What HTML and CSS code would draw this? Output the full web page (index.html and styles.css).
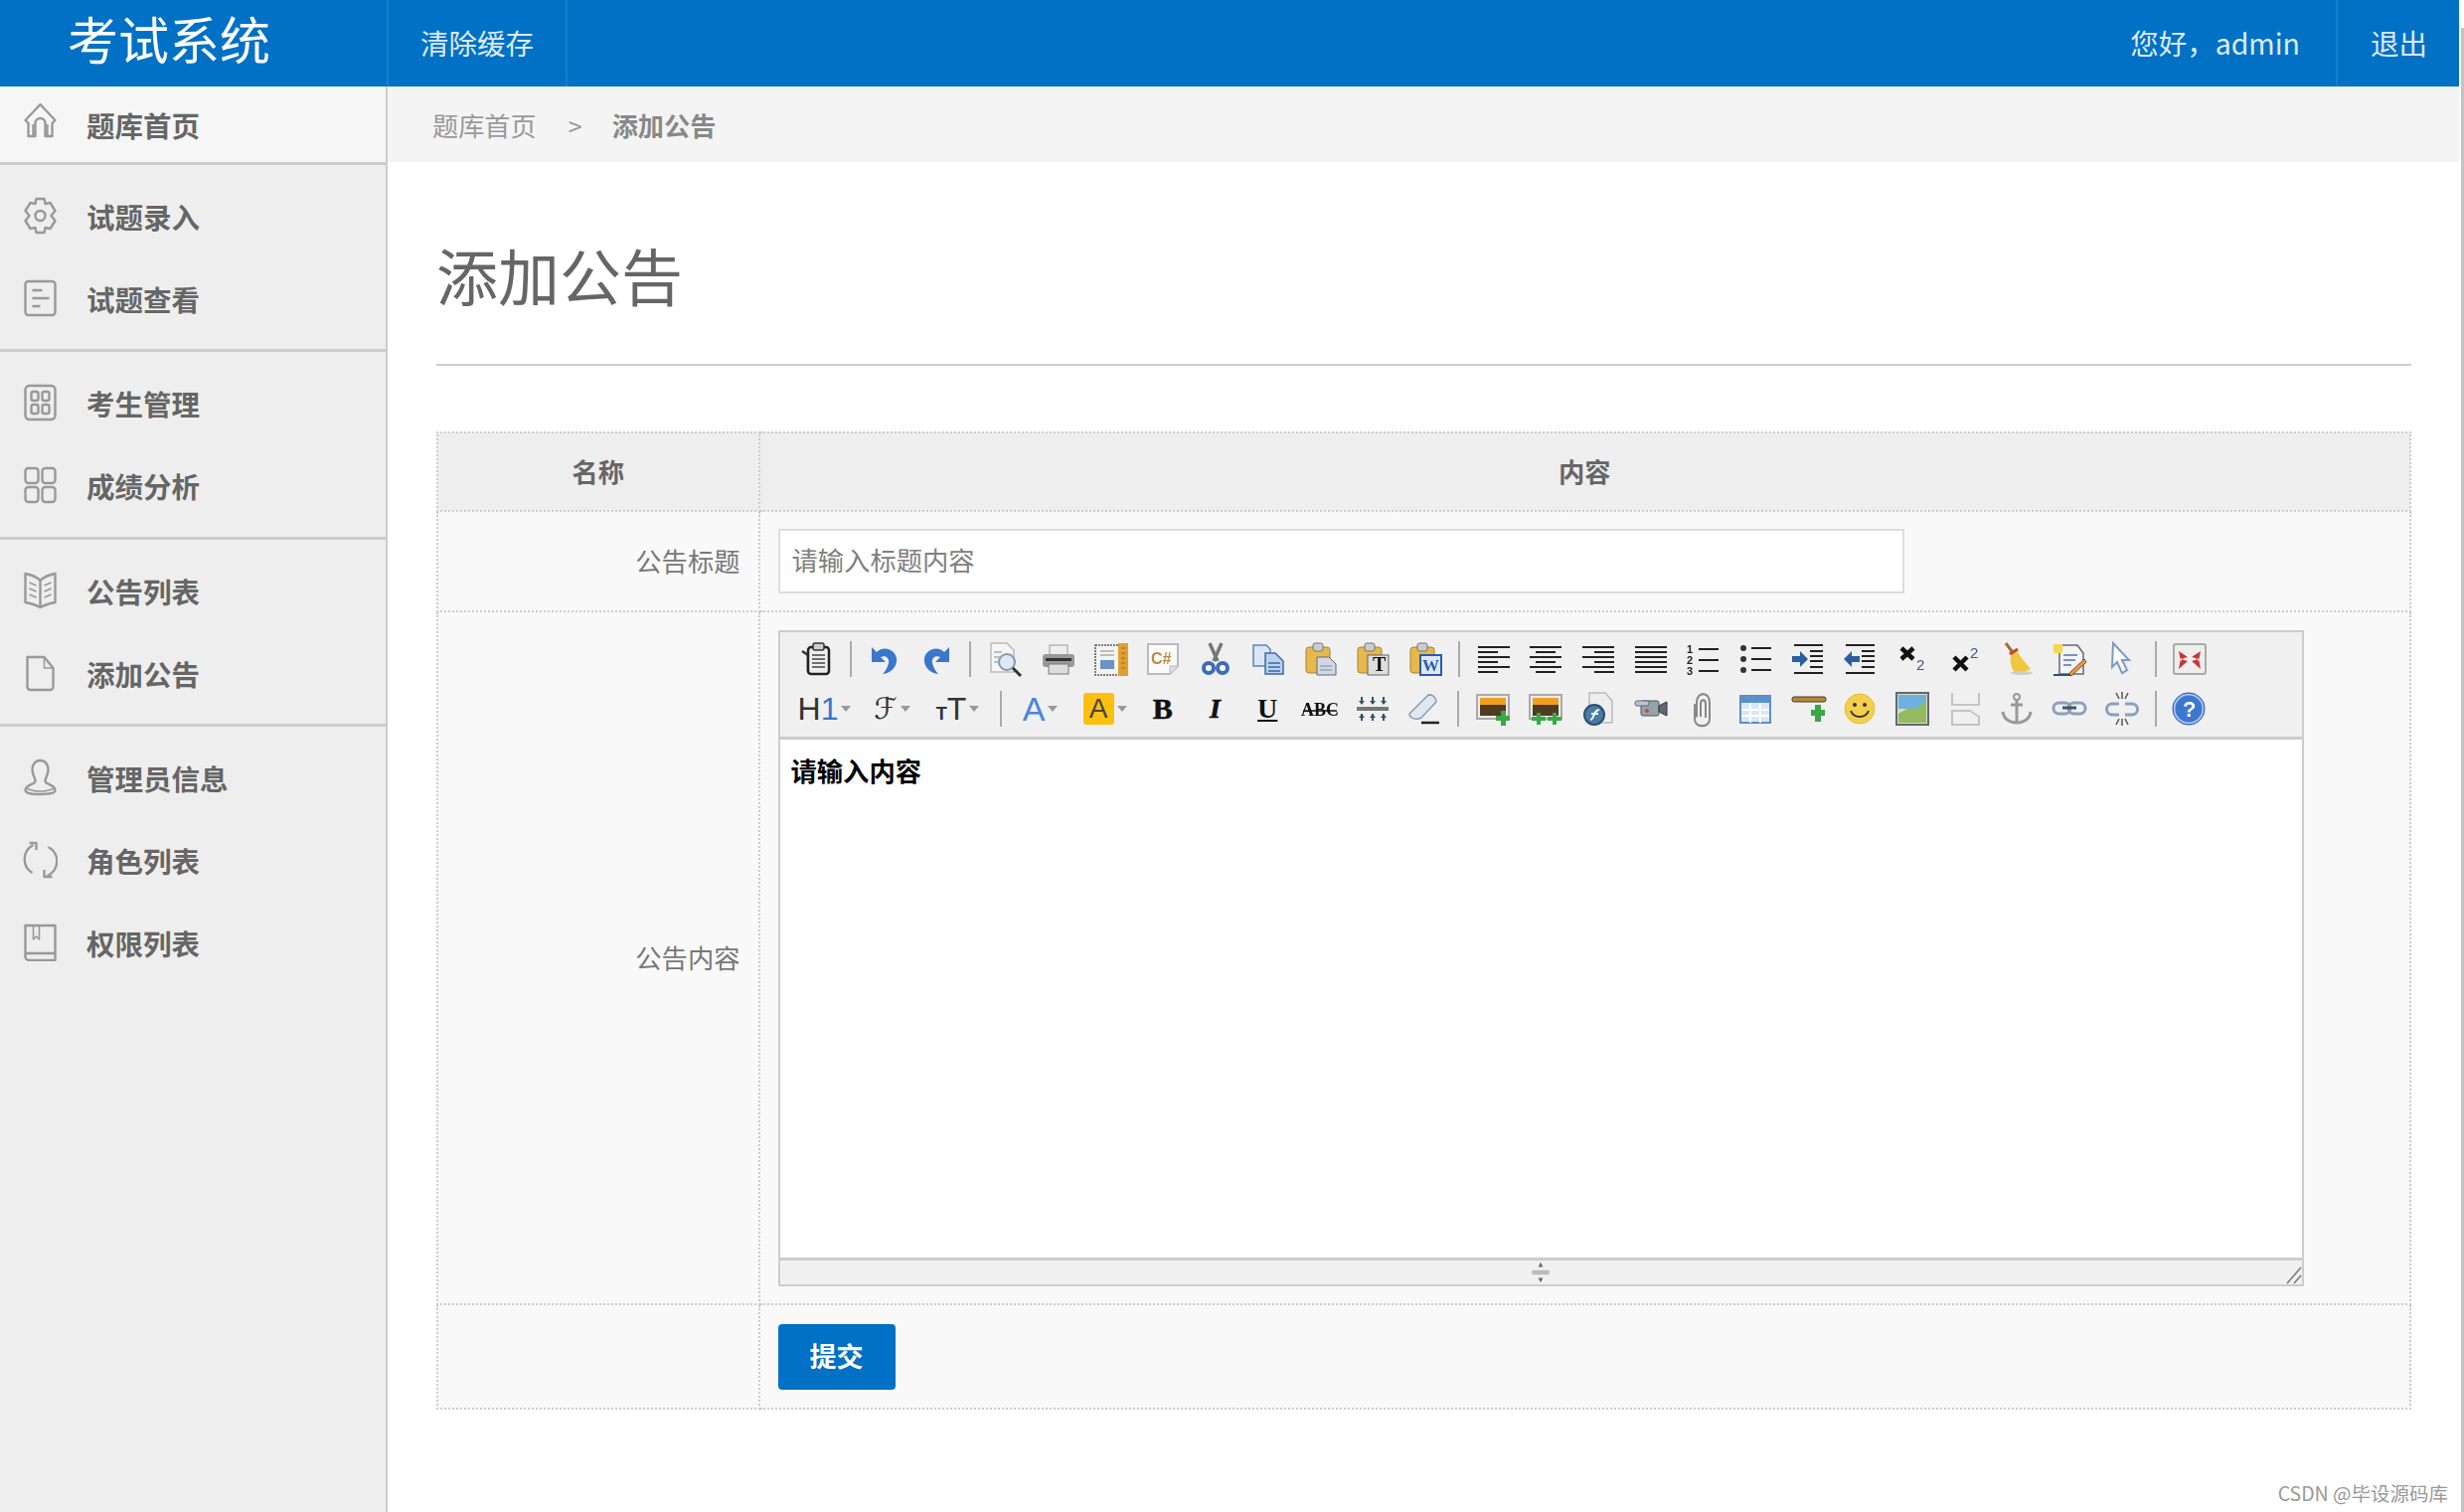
FILE: index.html
```html
<!DOCTYPE html>
<html lang="zh-CN">
<head>
<meta charset="utf-8">
<title>考试系统</title>
<link rel="stylesheet" href="styles.css">
</head>
<body>
<div class="page">
  <header class="topbar">
    <div class="logo">考试系统</div>
    <a class="nav-item nav-clear">清除缓存</a>
    <div class="spacer"></div>
    <span class="hello">您好，admin</span>
    <a class="nav-item nav-exit">退出</a>
  </header>
  <div class="body-row">
    <aside class="sidebar">
      <div class="home-row side-item">
        <svg class="side-icon home-icon" viewBox="0 0 34 38"><path d="M2 19 17 3l15 16-3 3v13h-7V22a5 5 0 0 0-10 0v13H5V22z"/><path d="M10 36V23M24 36V23"/></svg>
        <span>题库首页</span>
      </div>
      <div class="side-group g1">
        <div class="side-item">
          <svg class="side-icon" viewBox="0 0 34 38"><path d="M13 2h8l1 5 5-1 5 8-4 5 4 5-5 8-5-1-1 5h-8l-1-5-5 1-5-8 4-5-4-5 5-8 5 1z"/><circle cx="17" cy="19" r="5"/></svg>
          <span>试题录入</span>
        </div>
        <div class="side-item">
          <svg class="side-icon" viewBox="0 0 34 38"><rect x="2" y="2" width="30" height="34" rx="3"/><path d="M9 11h10M9 19h17M9 27h8"/></svg>
          <span>试题查看</span>
        </div>
      </div>
      <div class="side-group g2">
        <div class="side-item">
          <svg class="side-icon" viewBox="0 0 34 38"><rect x="2" y="2" width="30" height="34" rx="4"/><rect x="8" y="8" width="7" height="9" rx="2"/><rect x="19" y="8" width="7" height="9" rx="2"/><rect x="8" y="21" width="7" height="9" rx="2"/><rect x="19" y="21" width="7" height="9" rx="2"/></svg>
          <span>考生管理</span>
        </div>
        <div class="side-item">
          <svg class="side-icon" viewBox="0 0 34 38"><rect x="2" y="2" width="13" height="15" rx="3"/><rect x="19" y="2" width="13" height="15" rx="3"/><rect x="2" y="21" width="13" height="15" rx="3"/><rect x="19" y="21" width="13" height="15" rx="3"/></svg>
          <span>成绩分析</span>
        </div>
      </div>
      <div class="side-group g3">
        <div class="side-item">
          <svg class="side-icon" viewBox="0 0 34 38"><path d="M17 9C12 4 7 3 2 2v29c5 1 10 2 15 5 5-3 10-4 15-5V2c-5 1-10 2-15 7zM17 9v27"/><path class="thin" d="M6 11l7 3M6 17l7 3M6 23l7 3M28 11l-7 3M28 17l-7 3M28 23l-7 3"/></svg>
          <span>公告列表</span>
        </div>
        <div class="side-item">
          <svg class="side-icon" viewBox="0 0 34 38"><path d="M4 3h17l9 11v19a3 3 0 0 1-3 3H7a3 3 0 0 1-3-3z"/><path class="thin" d="M21 3v11h9"/></svg>
          <span>添加公告</span>
        </div>
      </div>
      <div class="side-group g4">
        <div class="side-item">
          <svg class="side-icon" viewBox="0 0 34 38"><path d="M17 2c5 0 8 4 8 9 0 6-3 8-3 12 0 3 10 3 10 9 0 3-6 4-15 4S2 35 2 32c0-6 10-6 10-9 0-4-3-6-3-12 0-5 3-9 8-9z"/><path class="thin" d="M3 30c8 4 20 4 28 0"/></svg>
          <span>管理员信息</span>
        </div>
        <div class="side-item">
          <svg class="side-icon" viewBox="0 0 34 38"><path d="M25 6A16 16 0 0 1 24 35M9 32A16 16 0 0 1 10 4"/><path d="M6 2h7v7M29 36h-8v-7"/></svg>
          <span>角色列表</span>
        </div>
        <div class="side-item">
          <svg class="side-icon" viewBox="0 0 34 38"><path d="M2 32V2h30v35H6a4 4 0 0 1-4-5zM2 30h30"/><path class="thin" d="M10 2v14l3-3 3 3V2"/></svg>
          <span>权限列表</span>
        </div>
      </div>
    </aside>
    <main class="main">
      <nav class="crumbs">
        <span class="crumb">题库首页</span>
        <span class="crumb-sep">&gt;</span>
        <span class="crumb-now">添加公告</span>
      </nav>
      <div class="content">
        <h1 class="title">添加公告</h1>
        <table class="form-table">
          <colgroup><col class="col-label"><col></colgroup>
          <tr class="row-head"><th>名称</th><th>内容</th></tr>
          <tr class="row-title">
            <td class="label">公告标题</td>
            <td class="value"><input class="text-input" type="text" placeholder="请输入标题内容"></td>
          </tr>
          <tr class="row-editor">
            <td class="label">公告内容</td>
            <td class="value">
              <div class="editor">
                <div class="toolbar">
                  <div class="tool-row">
                    <span class="tb"><svg viewBox="0 0 34 34"><path d="M2 9l6 4v15h3" fill="none" stroke="#333" stroke-width="2.5"/><rect x="8" y="5" width="21" height="27" rx="3" fill="#eee" stroke="#222" stroke-width="2.5"/><rect x="13" y="1" width="11" height="7" rx="2" fill="#ccc" stroke="#333" stroke-width="1.5"/><path d="M12 13h13M12 17h13M12 21h13M12 25h13" stroke="#444" stroke-width="1.5"/></svg></span>
                    <span class="sep"></span>
                    <span class="tb"><svg viewBox="0 0 34 34"><path d="M4 5v15h14l-5-5c5-2 9 1 8 6-1 4-3 8-6 11 9-1 15-8 14-16-2-9-13-13-20-6z" fill="#3a76c9"/></svg></span>
                    <span class="tb"><svg viewBox="0 0 34 34"><g transform="matrix(-1 0 0 1 34 0)"><path d="M4 5v15h14l-5-5c5-2 9 1 8 6-1 4-3 8-6 11 9-1 15-8 14-16-2-9-13-13-20-6z" fill="#3a76c9"/></g></svg></span>
                    <span class="sep sep-b"></span>
                    <span class="tb"><svg viewBox="0 0 34 34"><path d="M2 1h16l7 7v22H2z" fill="#f5f5f5" stroke="#bbb" stroke-width="1.5"/><path d="M5 10h8M5 15h6M5 20h6" stroke="#aab" stroke-width="1.5"/><circle cx="18" cy="20" r="8" fill="#dce8f5" stroke="#8899aa" stroke-width="2"/><path d="M24 26l8 8" stroke="#333" stroke-width="3"/></svg></span>
                    <span class="tb"><svg viewBox="0 0 34 34"><rect x="8" y="3" width="18" height="10" fill="#eee" stroke="#999"/><rect x="1" y="12" width="32" height="13" rx="3" fill="#999"/><rect x="4" y="16" width="26" height="3" fill="#333"/><rect x="7" y="22" width="20" height="10" fill="#ddd" stroke="#777"/></svg></span>
                    <span class="tb"><svg viewBox="0 0 34 34"><rect x="1" y="3" width="32" height="30" fill="#f4f4f4" stroke="#555" stroke-width="1.5" stroke-dasharray="2 1"/><rect x="24" y="1" width="10" height="33" fill="#e0a030"/><path d="M27 6h4M27 11h4M27 16h4M27 21h4M27 26h4" stroke="#a06810" stroke-width="1"/><path d="M6 9h14M6 13h14" stroke="#aaa" stroke-width="1.5"/><rect x="6" y="18" width="14" height="9" fill="#6a92c4"/></svg></span>
                    <span class="tb"><svg viewBox="0 0 34 34"><path d="M2 2h30v22l-8 8H2z" fill="#fafafa" stroke="#bbb" stroke-width="2"/><path d="M24 32v-8h8" fill="#ddd" stroke="#bbb"/><text class="csharp" x="5" y="22">C#</text></svg></span>
                    <span class="tb"><svg viewBox="0 0 34 34"><path d="M11 1l8 18M23 1l-8 18" stroke="#777" stroke-width="3.5"/><circle cx="10" cy="26" r="5" fill="#fff" stroke="#3a6fb5" stroke-width="4"/><circle cx="24" cy="26" r="5" fill="#fff" stroke="#3a6fb5" stroke-width="4"/></svg></span>
                    <span class="tb"><svg viewBox="0 0 34 34"><path d="M2 3h13l4 4v17H2z" fill="#dbe6f5" stroke="#5c86bd" stroke-width="1.5"/><path d="M14 11h10l8 8v13H14z" fill="#bcd2ec" stroke="#3c69a8" stroke-width="1.5"/><path d="M17 21h12M17 25h12M17 29h12" stroke="#3c69a8" stroke-width="1.5"/></svg></span>
                    <span class="tb"><svg viewBox="0 0 34 34"><rect x="2" y="5" width="24" height="26" rx="3" fill="#e7b84a" stroke="#a78232"/><rect x="9" y="1" width="10" height="8" rx="2" fill="#ccc" stroke="#777"/><path d="M13 15h12l7 7v11H13z" fill="#cfd8e3" stroke="#667"/><path d="M16 24h12M16 28h12" stroke="#889"/></svg></span>
                    <span class="tb"><svg viewBox="0 0 34 34"><rect x="2" y="5" width="24" height="26" rx="3" fill="#e7b84a" stroke="#a78232"/><rect x="9" y="1" width="10" height="8" rx="2" fill="#ccc" stroke="#777"/><rect x="12" y="13" width="21" height="20" fill="#ddd" stroke="#666"/><text class="pt" x="17" y="29">T</text></svg></span>
                    <span class="tb"><svg viewBox="0 0 34 34"><rect x="2" y="5" width="24" height="26" rx="3" fill="#e7b84a" stroke="#a78232"/><rect x="9" y="1" width="10" height="8" rx="2" fill="#ccc" stroke="#777"/><rect x="12" y="13" width="21" height="20" fill="#dbe7f7" stroke="#2b5bb0" stroke-width="2"/><text class="pw" x="14" y="29">W</text></svg></span>
                    <span class="sep sep-c"></span>
                    <span class="tb"><svg viewBox="0 0 34 34"><path d="M1 5h32M1 10h20M1 15h32M1 20h20M1 25h32M1 30h20" stroke="#222" stroke-width="2.2"/></svg></span>
                    <span class="tb"><svg viewBox="0 0 34 34"><path d="M1 5h32M7 10h20M1 15h32M7 20h20M1 25h32M7 30h20" stroke="#222" stroke-width="2.2"/></svg></span>
                    <span class="tb"><svg viewBox="0 0 34 34"><path d="M1 5h32M13 10h20M1 15h32M13 20h20M1 25h32M13 30h20" stroke="#222" stroke-width="2.2"/></svg></span>
                    <span class="tb"><svg viewBox="0 0 34 34"><path d="M1 5h32M1 10h32M1 15h32M1 20h32M1 25h32M1 30h32" stroke="#222" stroke-width="2.2"/></svg></span>
                    <span class="tb"><svg viewBox="0 0 34 34"><text class="ol" x="1" y="11">1</text><text class="ol" x="1" y="22">2</text><text class="ol" x="1" y="33">3</text><path d="M13 7h20M13 18h20M13 29h20" stroke="#222" stroke-width="2.2"/></svg></span>
                    <span class="tb"><svg viewBox="0 0 34 34"><circle cx="5" cy="6" r="3" fill="#333"/><circle cx="5" cy="17" r="3" fill="#333"/><circle cx="5" cy="28" r="3" fill="#333"/><path d="M13 6h20M13 17h20M13 28h20" stroke="#222" stroke-width="2.2"/></svg></span>
                    <span class="tb"><svg viewBox="0 0 34 34"><path d="M3 3h29M3 31h29M19 9h13M19 14h13M19 19h13M19 25h13" stroke="#222" stroke-width="2.2"/><path d="M1 14h8V9l8 8-8 8v-5H1z" fill="#2c5fa0"/></svg></span>
                    <span class="tb"><svg viewBox="0 0 34 34"><path d="M3 3h29M3 31h29M19 9h13M19 14h13M19 19h13M19 25h13" stroke="#222" stroke-width="2.2"/><path d="M17 14H9V9l-8 8 8 8v-5h8z" fill="#2c5fa0"/></svg></span>
                    <span class="tb"><svg viewBox="0 0 34 34"><path d="M6 6l12 11M18 6L6 17" stroke="#111" stroke-width="4.5"/><text class="subsup" x="21" y="28">2</text></svg></span>
                    <span class="tb"><svg viewBox="0 0 34 34"><path d="M6 15l13 13M19 15L6 28" stroke="#111" stroke-width="4.5"/><text class="subsup" x="22" y="16">2</text></svg></span>
                    <span class="tb"><svg viewBox="0 0 34 34"><path d="M6 1l9 12" stroke="#a0703a" stroke-width="3"/><path d="M11 13l6-4c4 6 9 12 14 18-5 3-12 4-17 2-3-5-4-11-3-16z" fill="#efc73e"/><path d="M10 12l8-5" stroke="#c5433a" stroke-width="3"/><ellipse cx="22" cy="31" rx="11" ry="2" fill="#ccc"/></svg></span>
                    <span class="tb"><svg viewBox="0 0 34 34"><path d="M7 3h18l6 8v21H7z" fill="#f4f4f4" stroke="#667" stroke-width="1.5"/><path d="M11 13h14M11 18h12M11 23h8" stroke="#4c76b0" stroke-width="1.5"/><path d="M1 2h9v9H1z" fill="#f4d84a"/><path d="M16 32l16-15 2 3-15 14z" fill="#d9a23a" stroke="#a33"/><path d="M1 33h17" stroke="#2b4f80" stroke-width="2"/></svg></span>
                    <span class="tb"><svg viewBox="0 0 34 34"><path d="M8 1l16 17h-7l5 10-5 3-5-11-5 5z" fill="#fff" stroke="#7d9bc4" stroke-width="2"/></svg></span>
                    <span class="sep"></span>
                    <span class="tb"><svg viewBox="0 0 34 34"><rect x="1" y="2" width="32" height="30" rx="2" fill="#eee" stroke="#aaa" stroke-width="2"/><path d="M6 9l9 6-4 1-3 3zM28 9l-9 6 4 1 3 3zM6 27l9-8-4-1-3-2zM28 27l-9-8 4-1 3-2z" fill="#c33"/></svg></span>
                  </div>
                  <div class="tool-row row-two">
                    <span class="tb tb-h"><span class="tx-h">H<b>1</b></span><i class="caret"></i></span>
                    <span class="tb tb-h"><span class="tx-f">ℱ</span><i class="caret"></i></span>
                    <span class="tb tb-s"><span class="tx-s"><small>T</small>T</span><i class="caret"></i></span>
                    <span class="sep sep-wide"></span>
                    <span class="tb tb-a"><span class="tx-a">A</span><i class="caret"></i></span>
                    <span class="tb tb-b"><span class="tx-y">A</span><i class="caret"></i></span>
                    <span class="tb"><span class="tx-b">B</span></span>
                    <span class="tb"><span class="tx-i">I</span></span>
                    <span class="tb"><span class="tx-u">U</span></span>
                    <span class="tb"><svg viewBox="0 0 34 34"><text class="abc" x="-2" y="24">ABC</text><path d="M0 19h34" stroke="#111" stroke-width="1.5"/></svg></span>
                    <span class="tb"><svg viewBox="0 0 34 34"><path d="M1 15h32v4H1z" fill="#777"/><path d="M6 5v7M17 5v7M28 5v7M6 22v7M17 22v7M28 22v7" stroke="#356" stroke-width="2"/><path d="M3 9l3 4 3-4M14 9l3 4 3-4M25 9l3 4 3-4M3 26l3-4 3 4M14 26l3-4 3 4M25 26l3-4 3 4" fill="#356"/></svg></span>
                    <span class="tb"><svg viewBox="0 0 34 34"><path d="M2 22L20 4c3-3 9 1 9 6L14 26c-6 3-12 0-12-4z" fill="#dfe7f2" stroke="#8a9ab0" stroke-width="1.5"/><path d="M14 31h18" stroke="#222" stroke-width="2.5"/></svg></span>
                    <span class="sep sep-d"></span>
                    <span class="tb"><svg viewBox="0 0 34 34"><rect x="1" y="3" width="32" height="24" fill="#eee" stroke="#aaa" stroke-width="2"/><rect x="4" y="6" width="26" height="7" fill="#f0a020"/><rect x="4" y="13" width="26" height="11" fill="#4d3c20"/><path d="M20 24h5v-5h5v5h4v5h-4v5h-5v-5h-5z" fill="#3aa845"/></svg></span>
                    <span class="tb"><svg viewBox="0 0 34 34"><rect x="1" y="3" width="32" height="24" fill="#eee" stroke="#aaa" stroke-width="2"/><rect x="4" y="6" width="26" height="7" fill="#f0a020"/><rect x="4" y="13" width="26" height="11" fill="#4d3c20"/><path d="M3 25h5v-4h4v4h5v4h-5v4H8v-4H3zM19 25h5v-4h4v4h5v4h-5v4h-4v-4h-5z" fill="#3aa845"/></svg></span>
                    <span class="tb"><svg viewBox="0 0 34 34"><path d="M8 1h16l7 8v22H8z" fill="#eee" stroke="#bbb" stroke-width="1.5"/><circle cx="13" cy="23" r="10" fill="#4a7ba8" stroke="#2b4f70" stroke-width="2"/><path d="M9 28c4 0 3-10 9-10M10 22h7" stroke="#fff" stroke-width="2" fill="none"/></svg></span>
                    <span class="tb"><svg viewBox="0 0 34 34"><rect x="7" y="9" width="18" height="15" rx="2" fill="#8fa6a8" stroke="#555"/><rect x="1" y="9" width="14" height="5" rx="2" fill="#b7c4d6" stroke="#667"/><path d="M25 14l8-4v14l-8-4z" fill="#667" stroke="#334"/><circle cx="13" cy="19" r="2" fill="#c44"/></svg></span>
                    <span class="tb"><svg viewBox="0 0 34 34"><path d="M11 24V11c0-11 13-11 13 0v15c0 8-15 8-15 0V12" transform="translate(0 -1) scale(1 1.1)" fill="none" stroke="#888" stroke-width="2"/><path d="M15 25V12c0-5 5-5 5 0v14" fill="none" stroke="#888" stroke-width="2"/></svg></span>
                    <span class="tb"><svg viewBox="0 0 34 34"><rect x="2" y="4" width="30" height="27" fill="#dbe7f5" stroke="#5f8ec5" stroke-width="2"/><rect x="3" y="5" width="28" height="6" fill="#5a8fd0"/><path d="M3 18h28M3 24h28M12 11v20M22 11v20" stroke="#fff" stroke-width="2"/></svg></span>
                    <span class="tb"><svg viewBox="0 0 34 34"><rect x="1" y="5" width="34" height="5" rx="2" fill="#b8873c" stroke="#4c3c20"/><path d="M20 18h4v-5h6v5h4v6h-4v6h-6v-6h-4z" fill="#3aa845"/></svg></span>
                    <span class="tb"><svg viewBox="0 0 34 34"><circle cx="17" cy="17" r="15" fill="#f4cf4c" stroke="#e8bb30"/><circle cx="12" cy="13" r="2" fill="#333"/><circle cx="22" cy="13" r="2" fill="#333"/><path d="M8 19c3 8 15 8 18 0" fill="none" stroke="#333" stroke-width="2"/></svg></span>
                    <span class="tb"><svg viewBox="0 0 34 34"><rect x="1" y="1" width="32" height="32" fill="#cfe0c0" stroke="#667" stroke-width="2"/><rect x="3" y="3" width="28" height="14" fill="#6fb0e0"/><path d="M3 22l10-6 8 1 10-8v22H3z" fill="#94bb60"/></svg></span>
                    <span class="tb"><svg viewBox="0 0 34 34"><path d="M4 1v12h27V1M4 33V19h18l9 6v8z" fill="none" stroke="#c4c4c4" stroke-width="2"/></svg></span>
                    <span class="tb"><svg viewBox="0 0 34 34"><circle cx="17" cy="5" r="3" fill="none" stroke="#999" stroke-width="2"/><path d="M17 8v23M11 13h12M3 20c1 8 8 11 14 11s13-3 14-11" fill="none" stroke="#999" stroke-width="3"/></svg></span>
                    <span class="tb"><svg viewBox="0 0 34 34"><rect x="1" y="11" width="17" height="11" rx="5.5" fill="none" stroke="#8ba0bd" stroke-width="3"/><rect x="16" y="11" width="17" height="11" rx="5.5" fill="none" stroke="#8ba0bd" stroke-width="3"/><path d="M10 16h14" stroke="#456" stroke-width="3"/></svg></span>
                    <span class="tb"><svg viewBox="0 0 34 34"><path d="M14 11H7a5 5 0 0 0 0 11h7M20 11h7a5 5 0 0 1 0 11h-7" transform="translate(0 1)" fill="none" stroke="#8ba0bd" stroke-width="3"/><path d="M11 1l3 6M17 0v7M23 1l-3 6M11 33l3-6M17 34v-7M23 33l-3-6" stroke="#555" stroke-width="1.5"/></svg></span>
                    <span class="sep"></span>
                    <span class="tb"><svg viewBox="0 0 34 34"><circle cx="17" cy="17" r="15" fill="#3b78d0" stroke="#a9c3ea" stroke-width="3"/><circle cx="17" cy="17" r="16" fill="none" stroke="#2a55a5"/><text class="help" x="11" y="25">?</text></svg></span>
                  </div>
                </div>
                <div class="edit-area">请输入内容</div>
                <div class="status">
                  <svg class="grip" viewBox="0 0 24 28"><path d="M12 1l-3 6h6zM12 27l-3-6h6z" fill="#666"/><rect x="1" y="11" width="22" height="6" rx="1" fill="#bbb"/></svg>
                  <svg class="corner" viewBox="0 0 16 20"><path d="M1 19L15 3M8 19l7-8" stroke="#777" stroke-width="1.5"/></svg>
                </div>
              </div>
            </td>
          </tr>
          <tr class="row-submit">
            <td></td>
            <td class="value"><button class="submit" type="button">提交</button></td>
          </tr>
        </table>
      </div>
    </main>
  </div>
  <div class="watermark">CSDN @毕设源码库</div>
</div>
<div class="edge"><div class="edge-bar"></div></div>
</body>
</html>
```
FILE: styles.css
```css
* { box-sizing: border-box; }
html, body { margin: 0; height: 100%; }
body {
  display: flex;
  height: 1521px;
  overflow: hidden;
  background: #fff;
  font-family: "Noto Sans CJK SC", "Noto Sans", sans-serif;
  color: #666;
}
.page { position: relative; width: 2474px; display: flex; flex-direction: column; }
.edge { width: 5px; padding: 28px 0 0 2px; }
.edge-bar { height: 100%; background: #c4c4c4; }

.topbar { display: flex; align-items: stretch; height: 87px; background: #0071c5; color: #dfeaf5; flex: none; }
.logo { width: 389px; padding-left: 68px; font-size: 51px; line-height: 76px; color: #fff; }
.nav-item { display: block; font-size: 28.5px; line-height: 86px; border-left: 2px solid #1a7ecb; }
.nav-clear { width: 182px; padding-left: 32px; border-right: 2px solid #1a7ecb; }
.spacer { flex: 1; }
.hello { font-size: 28.5px; line-height: 86px; padding-right: 36px; }
.nav-exit { width: 124px; padding-left: 33px; }

.body-row { display: flex; flex: 1; min-height: 0; }
.sidebar { width: 390px; background: #eee; border-right: 2px solid #ccc; flex: none; }
.side-item { display: flex; align-items: center; height: 83px; padding-left: 23px; gap: 29px; font-size: 28.5px; font-weight: 700; color: #666; }
.home-row { height: 79px; background: #f6f6f6; border-bottom: 3px solid #ccc; }
.side-icon { width: 35px; height: 38px; flex: none; margin-top: -2px; fill: none; stroke: #999; stroke-width: 2.4; stroke-linejoin: round; filter: blur(.3px); }
.home-icon { margin-top: -8px; }
.side-icon .thin { stroke-width: 1.6; }
.side-group { padding-top: 10px; border-bottom: 3px solid #ccc; }
.g1 { height: 188px; }
.g2 { height: 189px; }
.g3 { height: 188px; }
.g4 { border-bottom: 0; }

.main { flex: 1; min-width: 0; }
.crumbs { display: flex; align-items: center; height: 76px; padding: 2px 0 0 45px; background: #f4f4f4; font-size: 26.2px; color: #999; }
.crumb-sep { margin: 0 30px 0 32px; font-size: 25px; }
.crumb-now { font-weight: 700; color: #888; }
.content { padding: 0 48px 0 49px; }
.title { margin: 0 0 66px; padding: 73px 0 50px; font-size: 62px; line-height: 80px; font-weight: 400; color: #666; border-bottom: 2px solid #ccc; }

.form-table { width: 100%; border-collapse: collapse; font-size: 26.3px; background: #f9f9f9; table-layout: fixed; }
.form-table th, .form-table td { border: 2px dotted #ccc; padding: 0; }
.form-table th { padding-bottom: 3px; background: #eee; font-weight: 700; color: #666; }
.col-label { width: 323.5px; }
.row-head { height: 79px; }
.row-title { height: 101px; }
.row-editor { height: 697px; }
.row-submit { height: 105px; }
.label { text-align: right; padding: 0 18px 3px 0 !important; color: #777; }
.value { padding-left: 18px !important; }
.text-input { display: block; width: 1133px; height: 65px; padding: 0 12px 5px; border: 2px solid #ddd; background: #fff; font: inherit; color: #555; outline: 0; }
.text-input::placeholder { color: #808080; opacity: 1; }

.editor { display: flex; flex-direction: column; width: 1535px; height: 660px; border: 2px solid #ccc; background: #fff; }
.toolbar { height: 108px; padding: 1px 0 0 11px; background: #f0f0f0; border-bottom: 3px solid #ccc; flex: none; }
.tool-row { display: flex; align-items: center; height: 52px; }
.row-two { height: 49px; }
.tb { display: flex; align-items: center; justify-content: center; width: 52.7px; height: 49px; color: #222; flex: none; }
.tb svg { width: 34px; height: 34px; overflow: visible; filter: blur(.4px); }
.tb-h { width: 68px; }
.tb-s { width: 64px; }
.tb-a { width: 66px; }
.tb-b { width: 64px; }
.sep { width: 2px; height: 36px; margin: 0 6.5px; background: #aaa; flex: none; }
.sep-wide { margin: 0 6px 0 10px; }
.sep-b { margin-right: 9px; }
.sep-c { margin-right: 7.5px; }
.sep-d { margin-right: 8px; }
.caret { width: 0; height: 0; margin-left: 3px; border: 5px solid transparent; border-top: 6px solid #999; border-bottom: 0; }
.tx-h { font-family: "Liberation Sans", sans-serif; font-size: 32px; line-height: 1; color: #333; }
.tx-h b { font-weight: 400; color: #3a76c9; }
.tx-f { font-family: "DejaVu Serif", "DejaVu Sans", serif; font-style: italic; font-size: 30px; line-height: 1; color: #333; }
.tx-s { font-family: "Liberation Sans", sans-serif; font-size: 32px; line-height: 1; color: #333; }
.tx-s small { font-size: 18px; font-weight: 700; }
.tx-a { font-family: "Liberation Sans", sans-serif; font-size: 34px; line-height: 1; color: #4a86e0; }
.tx-y { display: block; width: 31px; height: 32px; border-radius: 3px; background: #fdc010; text-align: center; font-family: "Liberation Sans", sans-serif; font-size: 28px; line-height: 32px; color: #444; }
.tx-b, .tx-i, .tx-u { font-family: "Liberation Serif", serif; font-size: 28px; font-weight: 700; color: #111; line-height: 1; }
.tx-b { font-size: 30px; -webkit-text-stroke: .6px #111; }
.tx-i { font-style: italic; -webkit-text-stroke: .6px #111; }
.tx-u { text-decoration: underline; }
.csharp { font-family: "Liberation Sans", sans-serif; font-size: 16px; font-weight: 700; fill: #b98a4a; }
.pt { font-family: "Liberation Serif", serif; font-size: 20px; font-weight: 700; fill: #111; }
.pw { font-family: "Liberation Serif", serif; font-size: 17px; font-weight: 700; fill: #2b5bb0; }
.ol { font-family: "Liberation Sans", sans-serif; font-size: 11px; font-weight: 700; fill: #222; }
.subsup { font-family: "Liberation Sans", sans-serif; font-size: 15px; fill: #3c5a80; }
.abc { font-family: "Liberation Serif", serif; font-size: 18px; font-weight: 700; fill: #111; }
.help { font-family: "Liberation Sans", sans-serif; font-size: 22px; font-weight: 700; fill: #fff; }

.edit-area { flex: 1; padding: 11px 11px 0; font-size: 26.3px; font-weight: 700; line-height: 40px; color: #000; }
.status { position: relative; display: flex; justify-content: center; align-items: center; height: 27px; background: #f0f0f0; border-top: 3px solid #ccc; flex: none; }
.grip { width: 30px; height: 22px; }
.corner { position: absolute; right: 0; bottom: 0; width: 16px; height: 20px; }

.submit { display: block; width: 118px; height: 66px; padding: 0 0 3px; border: 0; border-radius: 4px; background: #0071c5; color: #fff; font: inherit; font-weight: 700; font-size: 27px; }

.watermark { position: absolute; right: 11px; bottom: 7px; font-size: 19.5px; line-height: 24px; color: #999; }
```
